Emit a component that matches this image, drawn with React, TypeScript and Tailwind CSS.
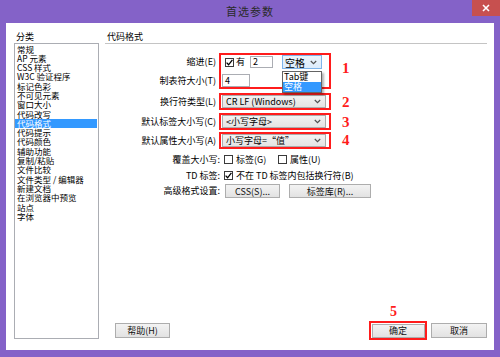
import React from "react"

const categories = [
  "常规",
  "AP 元素",
  "CSS 样式",
  "W3C 验证程序",
  "标记色彩",
  "不可见元素",
  "窗口大小",
  "代码改写",
  "代码格式",
  "代码提示",
  "代码颜色",
  "辅助功能",
  "复制/粘贴",
  "文件比较",
  "文件类型 / 编辑器",
  "新建文档",
  "在浏览器中预览",
  "站点",
  "字体",
]

function Check({ checked }: { checked?: boolean }) {
  return (
    <span className="w-[9px] h-[9px] border border-[#3a3a3a] bg-white flex items-center justify-center shrink-0">
      {checked && (
        <svg width="7" height="7" viewBox="0 0 7 7">
          <path d="M0.6 3.6 L2.6 5.8 L6.4 0.8" fill="none" stroke="#000" strokeWidth="1.3" />
        </svg>
      )}
    </span>
  )
}

function Chevron() {
  return (
    <svg width="7" height="5" viewBox="0 0 7 5" className="shrink-0">
      <path d="M0.8 1 L3.5 3.6 L6.2 1" fill="none" stroke="#505050" strokeWidth="1.2" />
    </svg>
  )
}

function Btn({ children, className = "" }: { children: React.ReactNode; className?: string }) {
  return (
    <div
      className={
        "h-[14px] border border-[#adadad] bg-linear-to-b from-[#f3f3f3] to-[#e2e2e2] flex items-center justify-center text-[9px] leading-none text-[#111] " +
        className
      }
    >
      {children}
    </div>
  )
}

function Num({ n, className = "" }: { n: string; className?: string }) {
  return (
    <div
      className={
        "ml-[11px] font-['Liberation_Serif',serif] font-bold text-[15px] leading-[15px] text-[#ff1c1c] " + className
      }
    >
      {n}
    </div>
  )
}

function SelectRow({ label, value, num, mt, numPt }: { label: string; value: string; num: string; mt: string; numPt: string }) {
  return (
    <div className={"flex items-start " + mt}>
      <div className="w-[111px] h-[17px] flex items-center justify-end">{label}</div>
      <div className="ml-[3px] w-[112px] h-[17px] border-2 border-[#ff1c1c] flex items-center">
        <div className="ml-[1px] w-[104px] h-[13px] border border-[#acacac] bg-linear-to-b from-[#f2f2f2] to-[#e4e4e4] flex items-center justify-between pl-[3px] pr-[4px] text-[9px]">
          <span>{value}</span>
          <Chevron />
        </div>
      </div>
      <Num n={num} className={numPt} />
    </div>
  )
}

export default function App() {
  return (
    <div className="w-[500px] h-[357px] bg-[#8462c8] flex flex-col font-['Noto_Sans_CJK_SC','Noto_Sans',sans-serif] text-black overflow-hidden">
      {/* title bar */}
      <div className="h-[23px] relative flex items-center justify-center">
        <span className="text-[11px] text-[#2a2a2a] tracking-[1px] -mt-[1px]">首选参数</span>
        <div className="absolute top-0 right-0 w-[28px] h-[16px] bg-[#c7504f] flex items-center justify-center">
          <svg width="8" height="8" viewBox="0 0 8 8">
            <path d="M1 1 L7 7 M7 1 L1 7" stroke="#fff" strokeWidth="1.6" />
          </svg>
        </div>
      </div>

      <div className="mx-[6px] h-[327px] bg-white flex pl-[8px] pt-[8px]">
        {/* categories */}
        <div className="w-[85px] flex flex-col">
          <div className="h-[12px] leading-[12px] pl-[2px] text-[9px]">分类</div>
          <div className="h-[296px] border border-[#abadb3] pt-[0.5px]">
            {categories.map((c) => (
              <div
                key={c}
                className={
                  "h-[9.3px] leading-[9.3px] text-[8.5px] pl-[2px] whitespace-nowrap " +
                  (c === "代码格式" ? "bg-[#3399ff] text-white mr-[1px]" : "")
                }
              >
                {c}
              </div>
            ))}
          </div>
        </div>

        {/* settings panel */}
        <div className="ml-[6px] w-[382px] flex flex-col text-[9px]">
          <div className="h-[13px] leading-[12px] border-b border-[#c4c4c4] pl-[2px]">代码格式</div>

          {/* group 1 */}
          <div className="flex items-start mt-[9px]">
            <div className="w-[111px] h-[36px] flex flex-col items-end pt-[2px]">
              <div className="h-[14px] flex items-center">缩进(E)</div>
              <div className="h-[13px] mt-[5px] flex items-center">制表符大小(T)</div>
            </div>
            <div className="ml-[3px] w-[112px] h-[36px] border-2 border-[#ff1c1c] relative">
              <div className="h-[14px] flex items-center">
                <span className="ml-[4px]">
                  <Check checked />
                </span>
                <span className="ml-[2px] w-[13px]">有</span>
                <div className="ml-[1px] w-[23px] h-[12px] border border-[#abadb3] flex items-center pl-[2px]">2</div>
                <div className="ml-[9px] w-[40px] h-[14px] border border-[#7eb4ea] bg-linear-to-b from-[#ecf4fc] to-[#dcecfc] flex items-center justify-between pl-[2px] pr-[4px] text-[10px]">
                  <span>空格</span>
                  <Chevron />
                </div>
              </div>
              <div className="mt-[5px] ml-[1px] w-[28px] h-[13px] border border-[#abadb3] flex items-center pl-[2px]">4</div>

              <div className="absolute left-[61px] top-[16px] w-[40px] border border-[#646464] bg-white shadow-[2px_2px_2px_rgba(0,0,0,0.3)] text-[9px]">
                <div className="h-[10px] leading-[10px] pl-[1px]">Tab键</div>
                <div className="h-[10px] leading-[10px] pl-[1px] bg-[#3399ff] text-white">空格</div>
              </div>
            </div>
            <Num n="1" className="pt-[8px]" />
          </div>

          <SelectRow label="换行符类型(L)" value="CR LF (Windows)" num="2" mt="mt-[4px]" numPt="pt-[2px]" />
          <SelectRow label="默认标签大小写(C)" value="<小写字母>" num="3" mt="mt-[3px]" numPt="pt-[2px]" />
          <SelectRow label="默认属性大小写(A)" value={"小写字母=\u201c值\u201d"} num="4" mt="mt-[2px]" numPt="pt-[1px]" />

          <div className="flex items-center h-[13px] mt-[4px]">
            <div className="w-[115px] text-right">覆盖大小写:</div>
            <span className="ml-[4px]">
              <Check />
            </span>
            <span className="ml-[3px] w-[42px]">标签(G)</span>
            <Check />
            <span className="ml-[3px]">属性(U)</span>
          </div>

          <div className="flex items-center h-[13px] mt-[3px]">
            <div className="w-[115px] text-right">TD 标签:</div>
            <span className="ml-[4px]">
              <Check checked />
            </span>
            <span className="ml-[3px]">不在 TD 标签内包括换行符(B)</span>
          </div>

          <div className="flex items-center h-[14px] mt-[2px]">
            <div className="w-[115px] text-right">高级格式设置:</div>
            <Btn className="ml-[5px] w-[55px]">CSS(S)...</Btn>
            <Btn className="ml-[9px] w-[82px]">标签库(R)...</Btn>
          </div>

          <div className="flex-1" />

          {/* bottom buttons */}
          <div className="flex items-center h-[19px] mb-[10px]">
            <Btn className="ml-[10px] w-[55px] h-[15px]">帮助(H)</Btn>
            <div className="ml-auto flex items-center">
              <div className="relative w-[58px] h-[19px] border-2 border-[#ff1c1c] flex items-center justify-center">
                <div className="absolute -top-[18px] left-[19px] font-['Liberation_Serif',serif] font-bold text-[14px] leading-[14px] text-[#ff1c1c]">
                  5
                </div>
                <Btn className="w-[53px] h-[14px] border-[#4f93d6]">确定</Btn>
              </div>
              <Btn className="ml-[4px] w-[56px] h-[15px]">取消</Btn>
            </div>
          </div>
        </div>
      </div>
    </div>
  )
}
